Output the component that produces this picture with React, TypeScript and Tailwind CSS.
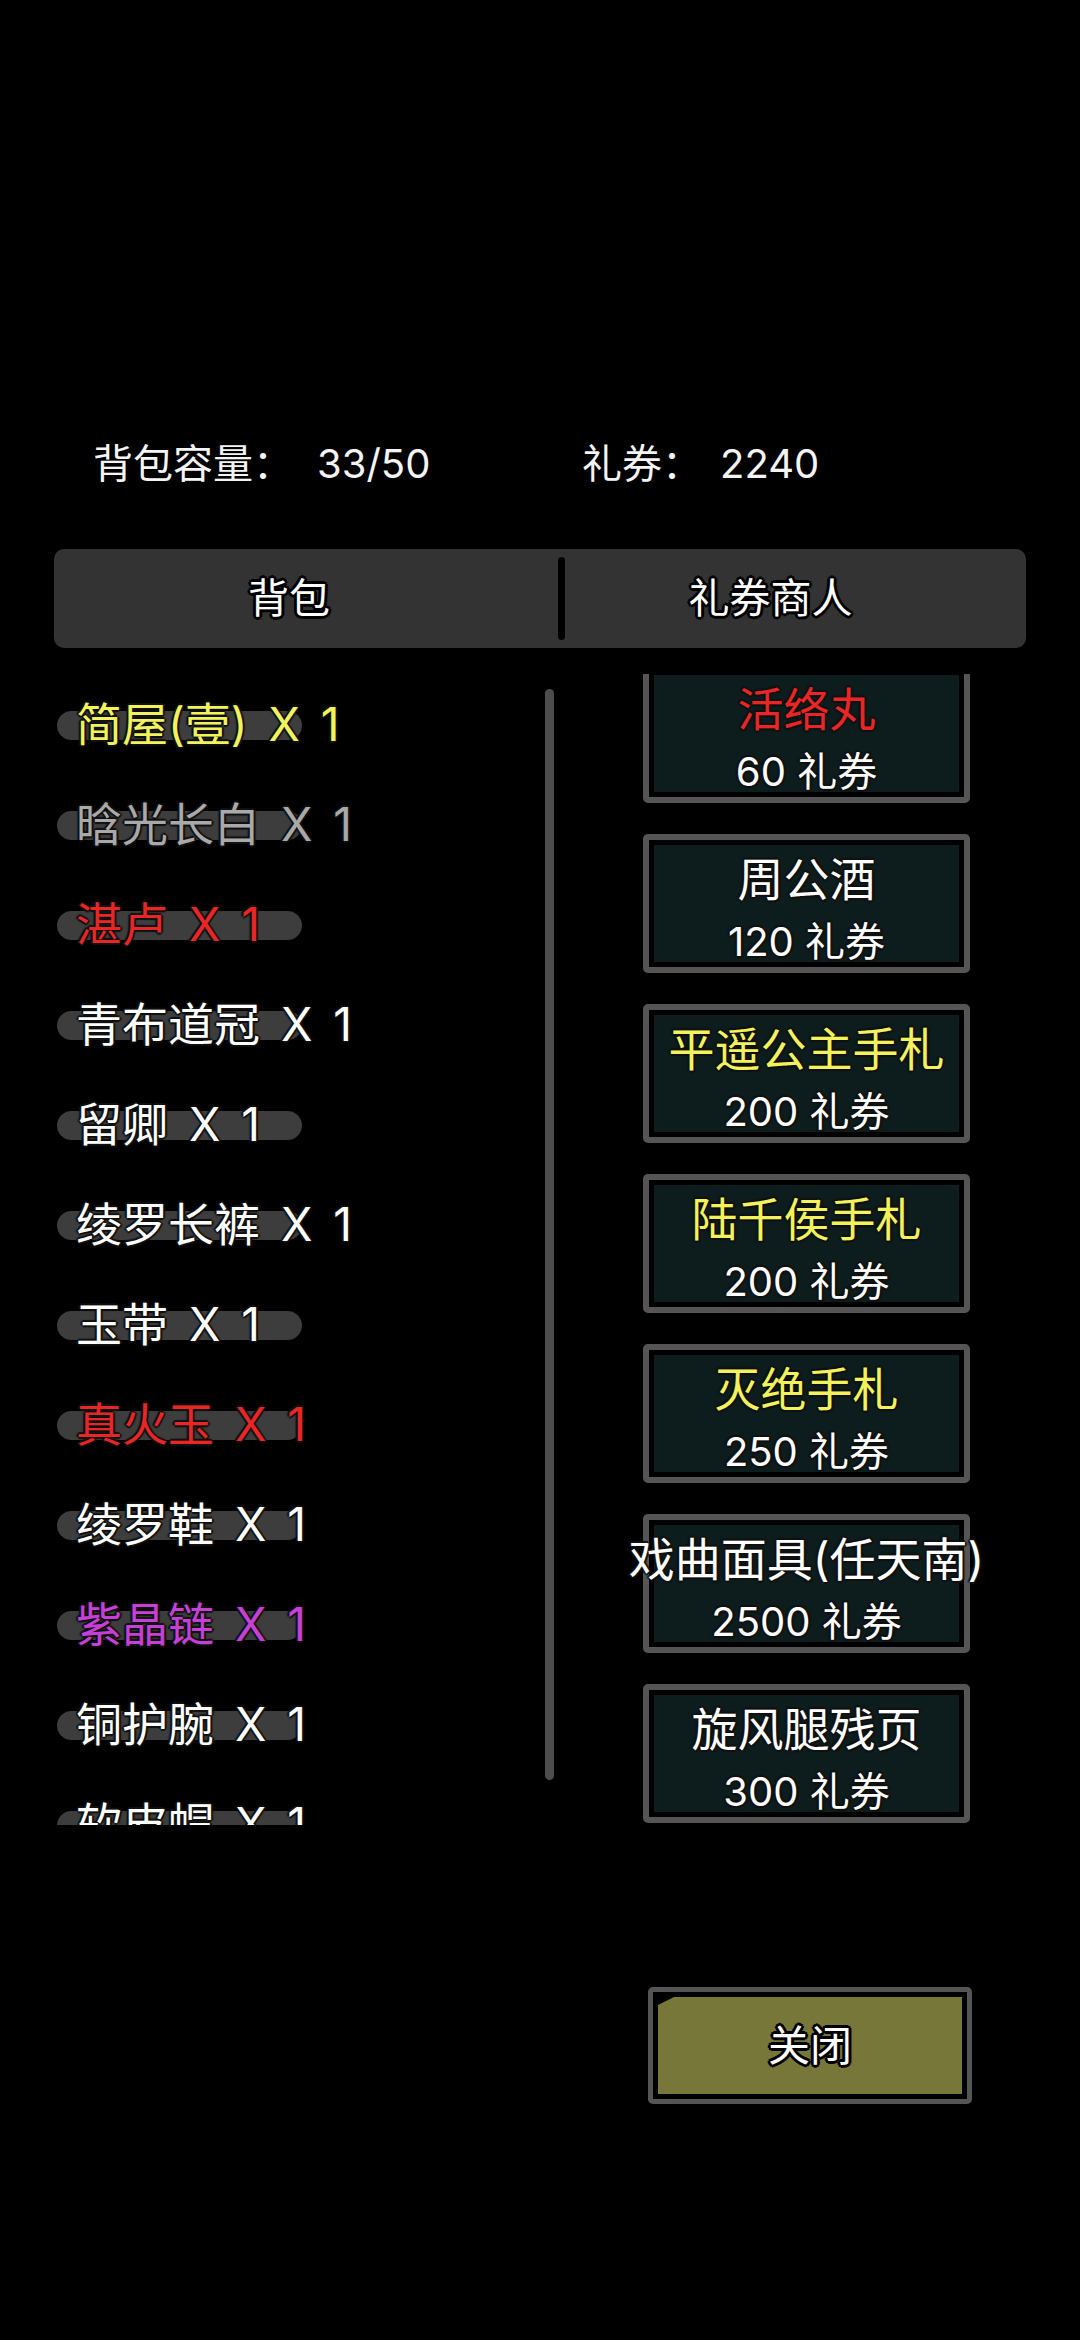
const bag = [
  { name: "简屋(壹)", color: "text-[#f2f25c]" },
  { name: "晗光长白", color: "text-[#a9a9a9]" },
  { name: "湛卢", color: "text-[#e92626]" },
  { name: "青布道冠", color: "text-white" },
  { name: "留卿", color: "text-white" },
  { name: "绫罗长裤", color: "text-white" },
  { name: "玉带", color: "text-white" },
  { name: "真火玉", color: "text-[#e92626]" },
  { name: "绫罗鞋", color: "text-white" },
  { name: "紫晶链", color: "text-[#c63fd6]" },
  { name: "铜护腕", color: "text-white" },
  { name: "软皮帽", color: "text-white" },
];

const shop = [
  { name: "活络丸", price: 60, color: "text-[#e92626]" },
  { name: "周公酒", price: 120, color: "text-white" },
  { name: "平遥公主手札", price: 200, color: "text-[#f2f25c]" },
  { name: "陆千侯手札", price: 200, color: "text-[#f2f25c]" },
  { name: "灭绝手札", price: 250, color: "text-[#f2f25c]" },
  { name: "戏曲面具(任天南)", price: 2500, color: "text-white" },
  { name: "旋风腿残页", price: 300, color: "text-white" },
];

// heavy black outline used on tab labels and the close button
const thick =
  "[text-shadow:0_0_2px_#000,3px_0_0_#000,-3px_0_0_#000,0_3px_0_#000,0_-3px_0_#000,2px_2px_0_#000,-2px_2px_0_#000,2px_-2px_0_#000,-2px_-2px_0_#000]";
// softer outline for list text
const thin =
  "[text-shadow:2px_0_1px_#111,-2px_0_1px_#111,0_2px_1px_#111,0_-2px_1px_#111,1px_1px_1px_#111,-1px_-1px_1px_#111]";

function BagRow({ name, color }: { name: string; color: string }) {
  return (
    <div className="relative h-[100px] flex items-center pl-[76px]">
      <div className="absolute left-[57px] top-[37px] w-[245px] h-[29px] rounded-full bg-[#3d3d3d]" />
      <span className={`relative whitespace-nowrap text-[46px] leading-none [word-spacing:8px] ${color} ${thin}`}>
        {name} X 1
      </span>
    </div>
  );
}

function ShopCard({ name, price, color }: { name: string; price: number; color: string }) {
  return (
    <div className="w-[327px] h-[139px] shrink-0 rounded-[5px] border-[6px] border-[#555555] bg-black p-[5px]">
      <div className="h-full bg-[#0d1c1c] flex flex-col items-center pt-[4px]">
        <div className={`whitespace-nowrap text-[46px] leading-[60px] ${color} ${thin}`}>{name}</div>
        <div className={`whitespace-nowrap text-[40px] leading-[44px] mt-[11px] text-white ${thin}`}>
          {price} 礼券
        </div>
      </div>
    </div>
  );
}

export default function App() {
  return (
    <div className="w-[1080px] h-[2340px] bg-black overflow-hidden font-['Inter','Noto_Sans_CJK_SC',sans-serif] text-white">
      {/* top stats */}
      <div className="pt-[440px] pl-[93px] flex items-center text-[40px] leading-[48px] text-[#f4f4f4]">
        <span className="w-[224px]">背包容量：</span>
        <span className="w-[265px]">33/50</span>
        <span className="w-[138px]">礼券：</span>
        <span>2240</span>
      </div>

      {/* tabs */}
      <div className="mt-[61px] ml-[54px] w-[972px] h-[99px] rounded-[10px] bg-[#333333] flex items-center">
        <div className={`w-[504px] pr-[34px] text-center text-[41px] ${thick}`}>背包</div>
        <div className="w-[7px] h-[83px] rounded-full bg-black" />
        <div className={`flex-1 pr-[50px] text-center text-[41px] ${thick}`}>礼券商人</div>
      </div>

      {/* body */}
      <div className="mt-[26px] h-[1151px] flex">
        <div className="w-[545px] h-full overflow-hidden">
          {bag.map((b) => (
            <BagRow key={b.name} {...b} />
          ))}
        </div>
        <div className="w-[9px] h-[1091px] mt-[15px] rounded-full bg-[#4d4d4d]" />
        <div className="flex-1 h-full overflow-hidden pl-[89px]">
          <div className="-mt-[10px] flex flex-col items-start gap-[31px]">
            {shop.map((s) => (
              <ShopCard key={s.name} {...s} />
            ))}
          </div>
        </div>
      </div>

      {/* close */}
      <div className="mt-[162px] pl-[648px]">
        <div className="w-[324px] h-[117px] rounded-[5px] border-[5px] border-[#555555] bg-black p-[5px]">
          <div className="h-full bg-[#77773a] flex items-center justify-center [clip-path:polygon(16px_0,100%_0,100%_100%,0_100%,0_8px)]">
            <span className={`text-[42px] ${thick}`}>关闭</span>
          </div>
        </div>
      </div>
    </div>
  );
}
